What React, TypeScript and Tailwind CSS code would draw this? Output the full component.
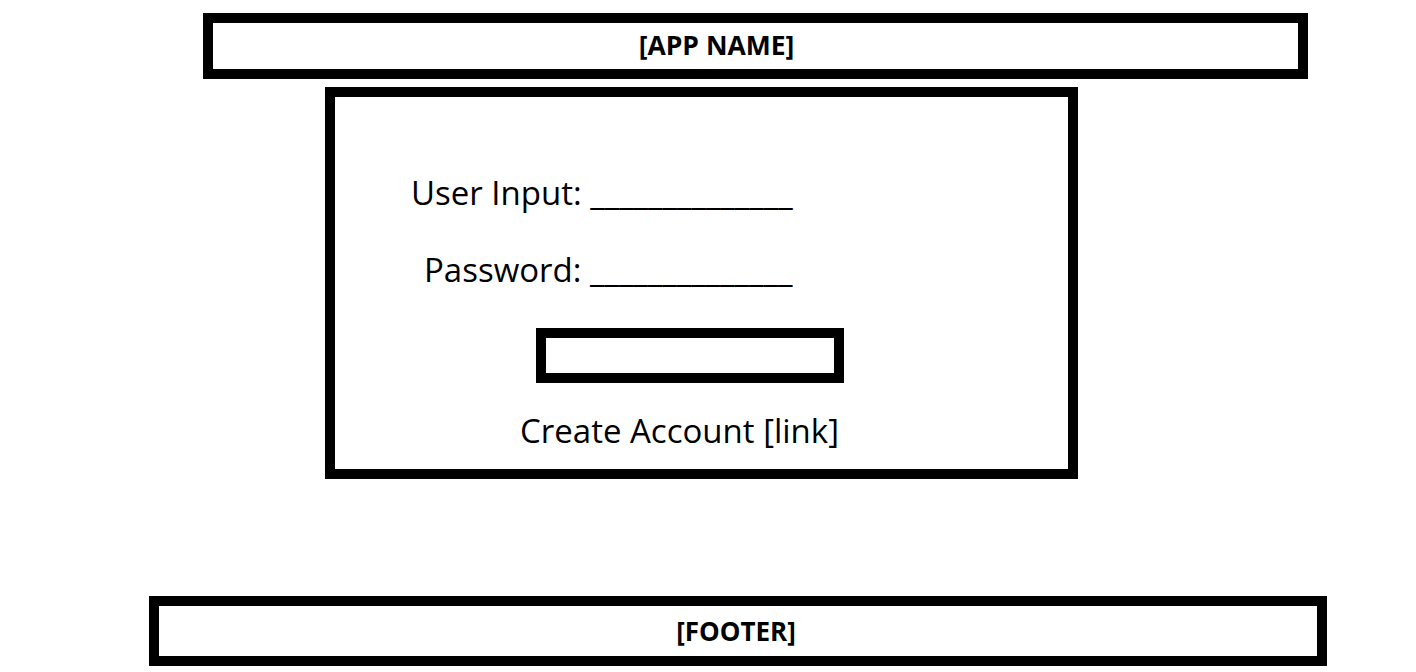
export default function App() {
  return (
    <main className="min-h-[672px] bg-white pt-[13px] text-black" style={{ fontFamily: '"Open Sans", "Noto Sans", sans-serif' }}>
      <header className="ml-[203px] flex h-[66px] w-[1105px] items-center justify-center border-[10px] border-black pr-[78px]">
        <h1 className="text-[26.5px] font-bold">[APP NAME]</h1>
      </header>

      <section className="ml-[325px] mt-[8px] h-[392px] w-[753px] border-[10px] border-black pt-[71px] text-[33px]">
        <p className="ml-[76px]">User Input: ______________</p>
        <p className="ml-[89px] mt-[27px]">Password: ______________</p>
        <button className="ml-[201px] mt-[34px] block h-[55px] w-[308px] border-[10px] border-black"></button>
        <a className="ml-[185px] mt-[31px] block w-fit leading-none">Create Account [link]</a>
      </section>

      <footer className="ml-[149px] mt-[117px] flex h-[70px] w-[1178px] items-center justify-center border-[10px] border-black pr-[4px]">
        <p className="text-[26px] font-bold">[FOOTER]</p>
      </footer>
    </main>
  );
}
